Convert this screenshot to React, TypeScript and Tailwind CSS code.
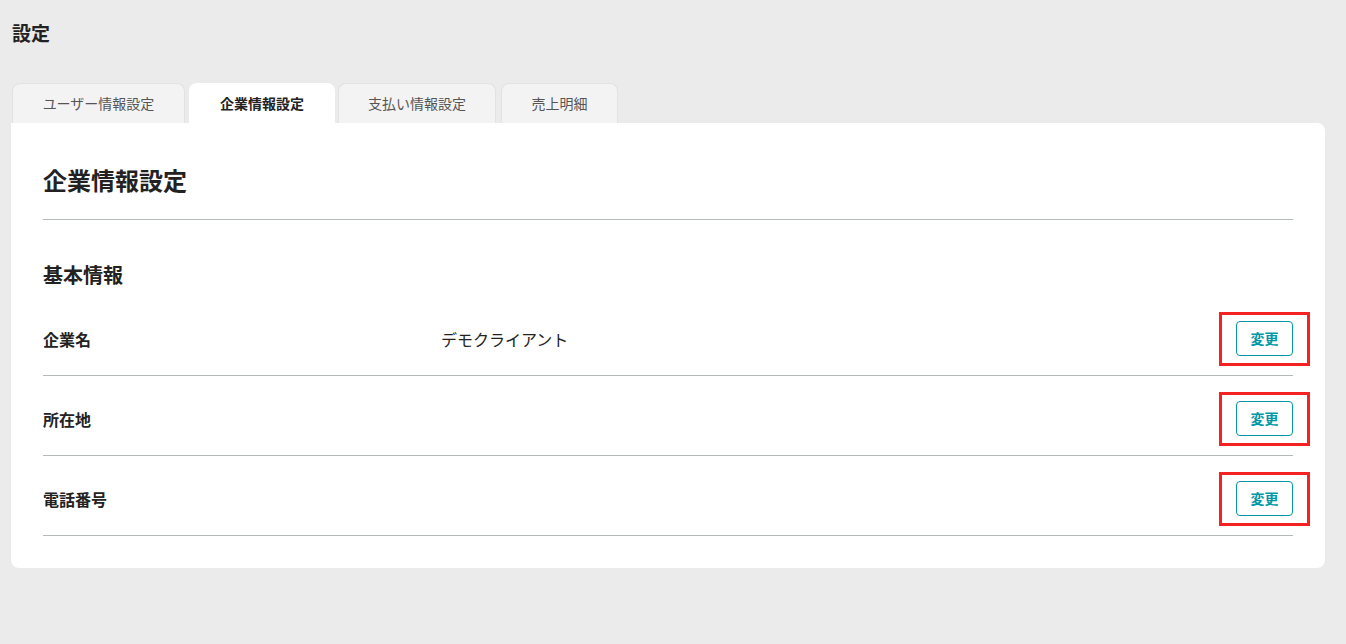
const tabs = [
  { label: 'ユーザー情報設定', cls: 'w-[173px]' },
  { label: '企業情報設定', cls: 'ml-[4px] w-[146px]' },
  { label: '支払い情報設定', cls: 'ml-[3px] w-[158px]' },
  { label: '売上明細', cls: 'ml-[5px] w-[117px]' },
]

const rows = [
  { label: '企業名', value: 'デモクライアント' },
  { label: '所在地', value: '' },
  { label: '電話番号', value: '' },
]

const App = () => {
  return (
    <div
      className="min-h-[644px] bg-[#ebebeb] px-[11px] pt-[21px] text-[#222]"
      style={{ fontFamily: '"Noto Sans CJK JP", "Noto Sans", sans-serif' }}
    >
      <h1 className="ml-px text-[19px] font-bold leading-[24px]">設定</h1>

      <div className="mt-[38px] flex pl-px">
        {tabs.map((t, i) => (
          <div
            key={t.label}
            className={
              i === 1
                ? `${t.cls} flex h-[40px] items-center justify-center rounded-t-[8px] bg-white text-[14px] font-bold text-[#222]`
                : `${t.cls} flex h-[40px] items-center justify-center rounded-t-[8px] border border-b-0 border-[#e2e2e2] bg-[#f3f3f3] text-[14px] text-[#555]`
            }
          >
            {t.label}
          </div>
        ))}
      </div>

      <div className="w-[1314px] rounded-b-[8px] rounded-tr-[8px] bg-white px-[32px] pb-[32px] pt-[40px]">
        <h2 className="text-[24px] font-bold leading-[34px]">企業情報設定</h2>
        <div className="mt-[22px] border-t border-[#b4b9b9]" />

        <h3 className="mt-[40px] text-[20px] font-bold leading-[30px]">基本情報</h3>

        <div className="mt-[6px]">
          {rows.map((r) => (
            <div
              key={r.label}
              className="flex items-center border-b border-[#b4b9b9] pb-[19px] pt-[25px]"
            >
              <div className="w-[398px] text-[16px] font-bold">{r.label}</div>
              <div className="flex-1 text-[16px]">{r.value}</div>
              <div className="relative">
                <button className="h-[35px] w-[57px] rounded-[4px] border border-[#0097a7] bg-white text-[14px] font-bold text-[#0097a7]">
                  変更
                </button>
                <div className="pointer-events-none absolute -bottom-[10px] -left-[17px] -right-[17px] -top-[9px] border-[3px] border-[#f52222]" />
              </div>
            </div>
          ))}
        </div>
      </div>
    </div>
  )
}

export default App
